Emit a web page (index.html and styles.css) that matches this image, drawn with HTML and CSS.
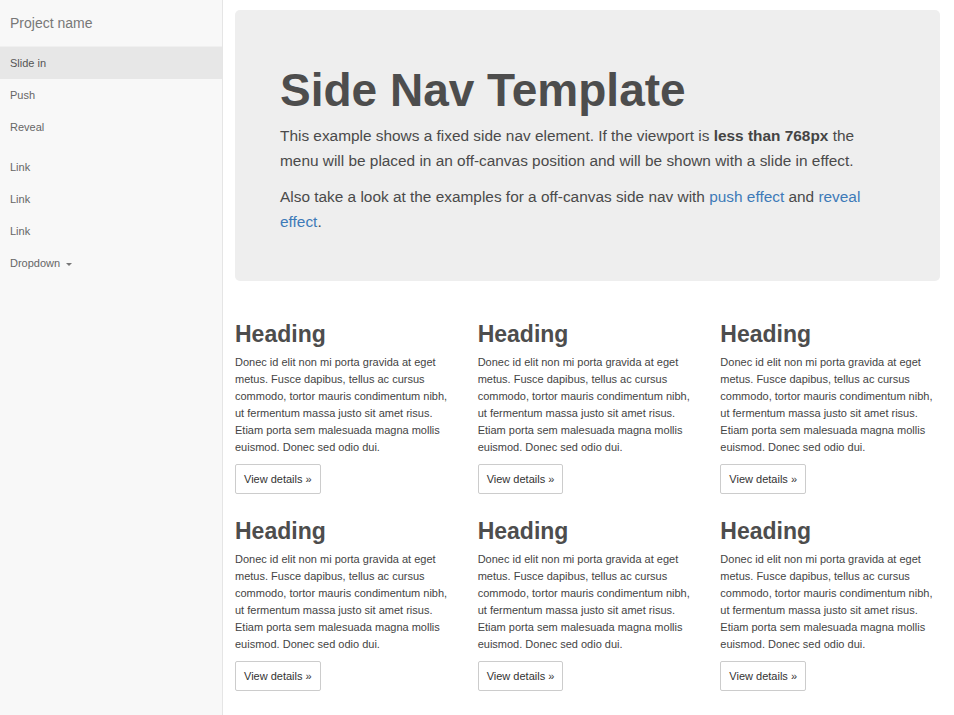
FILE: index.html
```
<!DOCTYPE html>
<html>
<head>
<meta charset="utf-8">
<title>Side Nav Template</title>
<link rel="stylesheet" href="styles.css">
</head>
<body>
<div class="layout">
  <nav class="sidenav">
    <div class="brand">Project name</div>
    <ul class="navlist">
      <li class="active"><a href="#">Slide in</a></li>
      <li><a href="#">Push</a></li>
      <li><a href="#">Reveal</a></li>
    </ul>
    <ul class="navlist second">
      <li><a href="#">Link</a></li>
      <li><a href="#">Link</a></li>
      <li><a href="#">Link</a></li>
      <li><a href="#">Dropdown <span class="caret"></span></a></li>
    </ul>
  </nav>
  <main class="main">
    <section class="jumbotron">
      <h1>Side Nav Template</h1>
      <p>This example shows a fixed side nav element. If the viewport is <strong>less than 768px</strong> the menu will be placed in an off-canvas position and will be shown with a slide in effect.</p>
      <p>Also take a look at the examples for a off-canvas side nav with <a href="#">push effect</a> and <a href="#">reveal effect</a>.</p>
    </section>
    <div class="grid">
      <div class="col">
        <h2>Heading</h2>
        <p>Donec id elit non mi porta gravida at eget metus. Fusce dapibus, tellus ac cursus commodo, tortor mauris condimentum nibh, ut fermentum massa justo sit amet risus. Etiam porta sem malesuada magna mollis euismod. Donec sed odio dui.</p>
        <a class="btn" href="#">View details &raquo;</a>
      </div>
      <div class="col">
        <h2>Heading</h2>
        <p>Donec id elit non mi porta gravida at eget metus. Fusce dapibus, tellus ac cursus commodo, tortor mauris condimentum nibh, ut fermentum massa justo sit amet risus. Etiam porta sem malesuada magna mollis euismod. Donec sed odio dui.</p>
        <a class="btn" href="#">View details &raquo;</a>
      </div>
      <div class="col">
        <h2>Heading</h2>
        <p>Donec id elit non mi porta gravida at eget metus. Fusce dapibus, tellus ac cursus commodo, tortor mauris condimentum nibh, ut fermentum massa justo sit amet risus. Etiam porta sem malesuada magna mollis euismod. Donec sed odio dui.</p>
        <a class="btn" href="#">View details &raquo;</a>
      </div>
      <div class="col">
        <h2>Heading</h2>
        <p>Donec id elit non mi porta gravida at eget metus. Fusce dapibus, tellus ac cursus commodo, tortor mauris condimentum nibh, ut fermentum massa justo sit amet risus. Etiam porta sem malesuada magna mollis euismod. Donec sed odio dui.</p>
        <a class="btn" href="#">View details &raquo;</a>
      </div>
      <div class="col">
        <h2>Heading</h2>
        <p>Donec id elit non mi porta gravida at eget metus. Fusce dapibus, tellus ac cursus commodo, tortor mauris condimentum nibh, ut fermentum massa justo sit amet risus. Etiam porta sem malesuada magna mollis euismod. Donec sed odio dui.</p>
        <a class="btn" href="#">View details &raquo;</a>
      </div>
      <div class="col">
        <h2>Heading</h2>
        <p>Donec id elit non mi porta gravida at eget metus. Fusce dapibus, tellus ac cursus commodo, tortor mauris condimentum nibh, ut fermentum massa justo sit amet risus. Etiam porta sem malesuada magna mollis euismod. Donec sed odio dui.</p>
        <a class="btn" href="#">View details &raquo;</a>
      </div>
    </div>
  </main>
</div>
</body>
</html>
```
FILE: styles.css
```
* { box-sizing: border-box; }
html, body { margin: 0; padding: 0; background: #fff; }
body {
  font-family: "Liberation Sans", Arial, Helvetica, sans-serif;
  font-size: 11px;
  color: #444;
  height: 715px;
  overflow: hidden;
}
.layout { display: flex; min-height: 715px; }
.sidenav {
  width: 223px;
  flex: none;
  background: #f8f8f8;
  border-right: 1px solid #e5e5e5;
}
.brand {
  height: 47px;
  padding: 15px 10px 0;
  font-size: 14px;
  color: #777;
  border-bottom: 1px solid #f0f0f0;
}
.navlist { list-style: none; margin: 0; padding: 0; }
.navlist.second { margin-top: 8px; }
.navlist li a {
  display: block;
  height: 32px;
  line-height: 32px;
  padding: 0 10px;
  color: #666;
  text-decoration: none;
  font-size: 11px;
}
.navlist li.active a { background: #e7e7e7; color: #555; }
.caret {
  display: inline-block;
  width: 0; height: 0;
  border-left: 3px solid transparent;
  border-right: 3px solid transparent;
  border-top: 3px solid #777;
  vertical-align: middle;
  margin-left: 3px;
}
.main {
  flex: 1;
  padding: 10px 14px 0 12px;
}
.jumbotron {
  background: #eee;
  border-radius: 5px;
  padding: 55px 45px 34px;
  height: 271px;
}
.jumbotron h1 {
  margin: 0 0 8px;
  font-size: 46px;
  line-height: 50px;
  font-weight: bold;
  color: #4d4d4d;
}
.jumbotron p {
  margin: 0 0 11px;
  font-size: 15.4px;
  line-height: 25px;
  color: #4a4a4a;
}
.jumbotron strong { font-weight: bold; color: #444; }
.jumbotron a { color: #3d7ab8; text-decoration: none; }
.grid {
  display: grid;
  grid-template-columns: repeat(3, 1fr);
  column-gap: 23px;
  padding-top: 38px;
}
.col { padding-bottom: 22px; }
.col h2 {
  margin: 0 0 5px;
  font-size: 23px;
  line-height: 30px;
  font-weight: bold;
  color: #4d4d4d;
}
.col p {
  margin: 0 0 8px;
  font-size: 11px;
  line-height: 17px;
  color: #444;
}
.btn {
  display: inline-block;
  height: 30px;
  line-height: 28px;
  padding: 0 8px;
  border: 1px solid #ccc;
  border-radius: 2px;
  background: #fff;
  color: #333;
  text-decoration: none;
  font-size: 11px;
}
```
